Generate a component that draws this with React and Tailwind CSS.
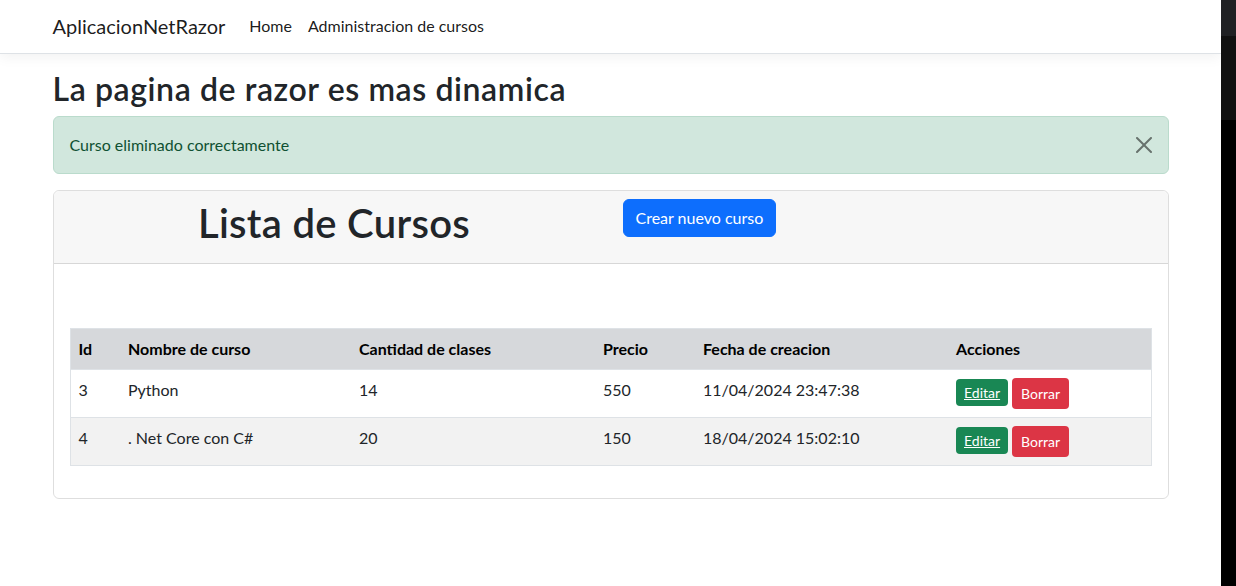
import React from "react";

const font = { fontFamily: "Lato, 'Noto Sans', sans-serif" };

const cursos = [
  { id: 3, nombre: "Python", clases: 14, precio: 550, fecha: "11/04/2024 23:47:38" },
  { id: 4, nombre: ". Net Core con C#", clases: 20, precio: 150, fecha: "18/04/2024 15:02:10" },
];

function CloseIcon() {
  return (
    <svg width="16" height="16" viewBox="0 0 16 16" className="opacity-50">
      <path
        fill="#000"
        d="M.293.293a1 1 0 0 1 1.414 0L8 6.586 14.293.293a1 1 0 1 1 1.414 1.414L9.414 8l6.293 6.293a1 1 0 0 1-1.414 1.414L8 9.414l-6.293 6.293a1 1 0 0 1-1.414-1.414L6.586 8 .293 1.707a1 1 0 0 1 0-1.414z"
      />
    </svg>
  );
}

export default function App() {
  return (
    <div className="flex w-[1236px] h-[586px] overflow-hidden bg-white text-[#212529]" style={font}>
      <div className="flex-1 min-w-0">
        {/* Navbar */}
        <nav className="h-[54px] border-b border-[#dee2e6] bg-white shadow-[0_4px_12px_rgba(0,0,0,0.05)] mb-4">
          <div className="w-[1140px] mx-auto px-3 h-full flex items-center pb-[1px]">
            <span className="text-[20px] text-black/90 mr-4">AplicacionNetRazor</span>
            <a className="text-[16px] text-black/90 px-2">Home</a>
            <a className="text-[16px] text-black/90 px-2">Administracion de cursos</a>
          </div>
        </nav>

        <main className="w-[1140px] mx-auto px-3">
          <h2 className="text-[32px] font-semibold leading-[1.2] tracking-[0.6px] mb-2">La pagina de razor es mas dinamica</h2>

          {/* Alert */}
          <div className="relative flex items-center bg-[#d1e7dd] border border-[#badbcc] text-[#0f5132] rounded-md py-4 pl-4 pr-12 mb-4 text-[16px] leading-6">
            Curso eliminado correctamente
            <button className="absolute right-0 top-0 px-4 py-5">
              <CloseIcon />
            </button>
          </div>

          {/* Card */}
          <div className="border border-black/[0.13] rounded-md">
            <div className="bg-[#f7f7f7] border-b border-black/[0.13] px-4 py-2 rounded-t-md">
              <div className="grid grid-cols-2 -mx-3">
                <div className="px-3 text-center">
                  <h1 className="text-[40px] font-semibold leading-[1.2] tracking-[0.3px] mb-2">Lista de Cursos</h1>
                </div>
                <div className="px-3">
                  <button className="bg-[#0d6efd] text-white text-[16px] leading-6 px-3 py-[6px] rounded-md border border-[#0d6efd]">
                    Crear nuevo curso
                  </button>
                </div>
              </div>
            </div>

            <div className="p-4">
              <div className="h-12" />
              <table className="w-full table-fixed border border-[#dee2e6] border-collapse mb-4 text-[16px]">
                <thead>
                  <tr className="bg-[#d6d8db] text-black font-bold text-left">
                    <th className="w-[50px] p-2 leading-6">Id</th>
                    <th className="w-[231px] p-2 leading-6">Nombre de curso</th>
                    <th className="w-[244px] p-2 leading-6">Cantidad de clases</th>
                    <th className="w-[100px] p-2 leading-6">Precio</th>
                    <th className="w-[253px] p-2 leading-6">Fecha de creacion</th>
                    <th className="p-2 leading-6">Acciones</th>
                  </tr>
                </thead>
                <tbody>
                  {cursos.map((c, i) => (
                    <tr key={c.id} className={"border-t border-[#dee2e6] align-top " + (i % 2 === 1 ? "bg-[#f2f2f2]" : "bg-white")}>
                      <td className="p-2 leading-6">{c.id}</td>
                      <td className="p-2 leading-6">{c.nombre}</td>
                      <td className="p-2 leading-6">{c.clases}</td>
                      <td className="p-2 leading-6">{c.precio}</td>
                      <td className="p-2 leading-6">{c.fecha}</td>
                      <td className="p-2 leading-6">
                        <div className="flex items-start gap-1">
                          <a className="bg-[#198754] text-white underline text-[14px] leading-[19px] px-2 py-1 rounded mt-[1px]">Editar</a>
                          <button className="bg-[#dc3545] text-white text-[14px] leading-5 px-[9px] h-[31px] rounded">Borrar</button>
                        </div>
                      </td>
                    </tr>
                  ))}
                </tbody>
              </table>
            </div>
          </div>
        </main>
      </div>

      {/* Right window strip */}
      <div className="w-[15px] flex flex-col">
        <div className="h-[36px] bg-[#202124]" />
        <div className="h-[84px] bg-[#111111]" />
        <div className="flex-1 bg-black" />
      </div>
    </div>
  );
}
